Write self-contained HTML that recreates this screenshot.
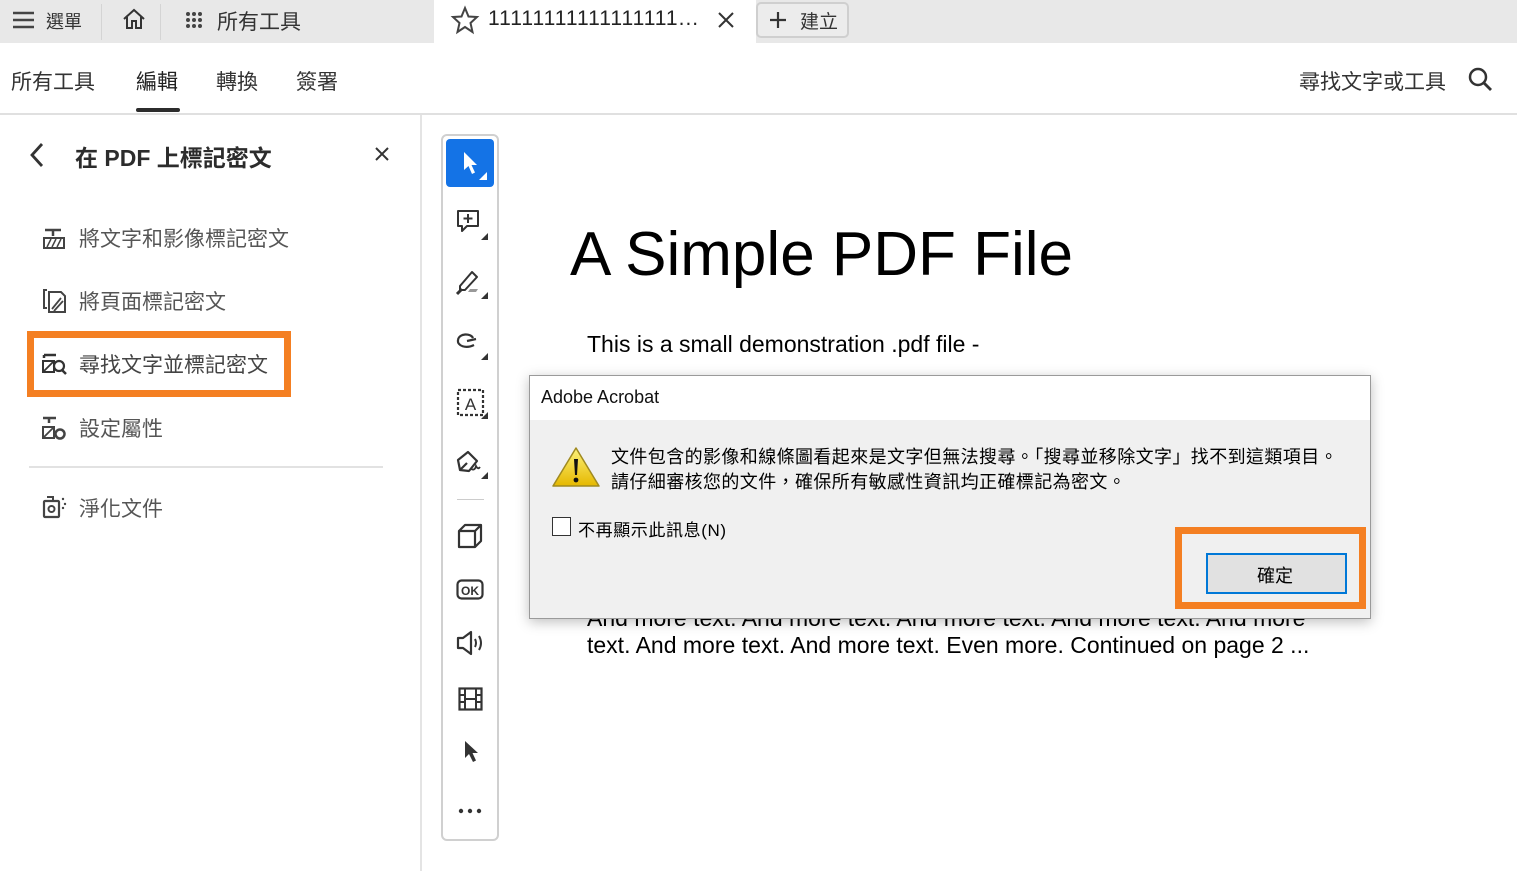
<!DOCTYPE html>
<html><head><meta charset="utf-8"><style>
*{margin:0;padding:0;box-sizing:border-box}
body{width:1517px;height:871px;overflow:hidden;background:#fff;font-family:"Liberation Sans","Noto Sans CJK TC",sans-serif;color:#2c2c2c;position:relative}
.abs{position:absolute}
.t{white-space:nowrap}
svg{position:absolute;overflow:visible}
</style></head><body>
<div class="abs" style="left:0;top:0;width:1517px;height:43px;background:#e8e8e8"></div>
<div class="abs" style="left:434px;top:0;width:322px;height:43px;background:#fff"></div>
<svg style="left:12px;top:10px" width="24" height="20"><path d="M1 3h21M1 10h21M1 17h21" stroke="#444" stroke-width="2.5"/></svg>
<div class="abs t" style="left:46px;top:8px;font-size:18px;color:#333">選單</div>
<div class="abs" style="left:101px;top:4px;width:1px;height:36px;background:#d4d4d4"></div>
<svg style="left:122px;top:8px" width="24" height="22"><path d="M2 11 L12 2 L22 11 M5 9 V20 H10 V13 H14 V20 H19 V9" fill="none" stroke="#333" stroke-width="2"/></svg>
<div class="abs" style="left:160px;top:4px;width:1px;height:36px;background:#d4d4d4"></div>
<svg style="left:185px;top:11px" width="18" height="18"><g fill="#444"><circle cx="3" cy="3" r="2"/><circle cx="9" cy="3" r="2"/><circle cx="15" cy="3" r="2"/><circle cx="3" cy="9" r="2"/><circle cx="9" cy="9" r="2"/><circle cx="15" cy="9" r="2"/><circle cx="3" cy="15" r="2"/><circle cx="9" cy="15" r="2"/><circle cx="15" cy="15" r="2"/></g></svg>
<div class="abs t" style="left:217px;top:6px;font-size:21px;color:#333">所有工具</div>
<svg style="left:451px;top:6px" width="28" height="28"><path d="M14 2 L17.5 10.5 L26 11 L19.5 17 L21.5 26 L14 21 L6.5 26 L8.5 17 L2 11 L10.5 10.5 Z" fill="none" stroke="#444" stroke-width="2"/></svg>
<div class="abs t" style="left:488px;top:7px;font-size:21px;color:#222;letter-spacing:1px">11111111111111111...</div>
<svg style="left:718px;top:12px" width="16" height="16"><path d="M1 1L15 15M15 1L1 15" stroke="#333" stroke-width="2"/></svg>
<div class="abs" style="left:756px;top:2px;width:93px;height:36px;border:2px solid #cfcfcf;border-radius:5px;background:#ececec"></div>
<svg style="left:769px;top:11px" width="18" height="18"><path d="M9 1V17M1 9H17" stroke="#333" stroke-width="2.2"/></svg>
<div class="abs t" style="left:800px;top:7px;font-size:19px;color:#333">建立</div>
<div class="abs t" style="left:11px;top:66px;font-size:21px;color:#333">所有工具</div>
<div class="abs t" style="left:136px;top:66px;font-size:21px;color:#222">編輯</div>
<div class="abs" style="left:136px;top:108px;width:44px;height:4px;background:#2c2c2c;border-radius:2px"></div>
<div class="abs t" style="left:216px;top:66px;font-size:21px;color:#333">轉換</div>
<div class="abs t" style="left:296px;top:66px;font-size:21px;color:#333">簽署</div>
<div class="abs t" style="left:1299px;top:66px;font-size:21px;color:#333">尋找文字或工具</div>
<svg style="left:1468px;top:67px" width="26" height="26"><circle cx="10" cy="10" r="8" fill="none" stroke="#333" stroke-width="2.5"/><path d="M16 16L23 23" stroke="#333" stroke-width="2.8"/></svg>
<div class="abs" style="left:0;top:113px;width:1517px;height:2px;background:#e0e0e0"></div>
<div class="abs" style="left:420px;top:115px;width:2px;height:756px;background:#e4e4e4"></div>
<svg style="left:29px;top:142px" width="16" height="26"><path d="M13 2L3 13L13 24" fill="none" stroke="#333" stroke-width="2.8"/></svg>
<div class="abs t" style="left:75px;top:139px;font-size:23px;font-weight:bold;color:#2c2c2c">在 PDF 上標記密文</div>
<svg style="left:375px;top:147px" width="14" height="14"><path d="M1 1L13 13M13 1L1 13" stroke="#333" stroke-width="2"/></svg>
<svg style="left:43px;top:228px" width="22" height="22"><path d="M2 2H18M10 2V8" stroke="#444" stroke-width="2.5"/><rect x="1" y="10" width="20" height="10" fill="none" stroke="#444" stroke-width="2"/><path d="M4 19L8 11M9 19L13 11M14 19L18 11" stroke="#444" stroke-width="1.5"/></svg>
<div class="abs t" style="left:79px;top:223px;font-size:21px;color:#555">將文字和影像標記密文</div>
<svg style="left:41px;top:288px" width="26" height="26"><path d="M6 2H3V20H6" fill="none" stroke="#444" stroke-width="2"/><path d="M8 4H20L24 8V24H8Z" fill="none" stroke="#444" stroke-width="2"/><path d="M11 21L20 10M13 23L22 13" stroke="#444" stroke-width="1.8"/></svg>
<div class="abs t" style="left:79px;top:286px;font-size:21px;color:#555">將頁面標記密文</div>
<div class="abs" style="left:27px;top:331px;width:264px;height:66px;border:7px solid #f47f22"></div>
<svg style="left:42px;top:352px" width="26" height="24"><path d="M2 3H14M2 3V6" stroke="#333" stroke-width="2.5" fill="none"/><rect x="1" y="9" width="11" height="11" fill="none" stroke="#333" stroke-width="2"/><path d="M2 19L11 10" stroke="#333" stroke-width="1.8"/><circle cx="17" cy="14" r="5" fill="none" stroke="#333" stroke-width="2.2"/><path d="M20 18L24 22" stroke="#333" stroke-width="2.5"/></svg>
<div class="abs t" style="left:79px;top:349px;font-size:21px;color:#444">尋找文字並標記密文</div>
<svg style="left:42px;top:416px" width="26" height="26"><path d="M1 2H14M7 2V7" stroke="#444" stroke-width="2.5"/><rect x="1" y="11" width="11" height="11" fill="none" stroke="#444" stroke-width="2"/><path d="M2 21L11 12" stroke="#444" stroke-width="1.8"/><circle cx="18" cy="18" r="4.5" fill="none" stroke="#444" stroke-width="2.5"/></svg>
<div class="abs t" style="left:79px;top:413px;font-size:21px;color:#555">設定屬性</div>
<div class="abs" style="left:29px;top:466px;width:354px;height:2px;background:#e2e2e2"></div>
<svg style="left:43px;top:495px" width="26" height="24"><rect x="1" y="6" width="15" height="16" rx="1" fill="none" stroke="#444" stroke-width="2.2"/><path d="M4 2H10V6" fill="none" stroke="#444" stroke-width="2"/><circle cx="8.5" cy="14" r="3" fill="none" stroke="#444" stroke-width="2"/><circle cx="20" cy="4" r="1.2" fill="#444"/><circle cx="22" cy="9" r="1.2" fill="#444"/><circle cx="20" cy="13" r="1.2" fill="#444"/></svg>
<div class="abs t" style="left:79px;top:493px;font-size:21px;color:#555">淨化文件</div>
<div class="abs" style="left:441px;top:134px;width:58px;height:707px;border:2px solid #d0d0d0;border-radius:6px;background:#fff"></div>
<div class="abs" style="left:446px;top:139px;width:48px;height:48px;background:#1473e6;border-radius:4px"></div>
<svg style="left:462px;top:150px" width="28" height="32"><path d="M2 2V20L6.5 16L10 24L13 22.5L9.5 15H15Z" fill="#fff"/><path d="M17 30L25 22V30Z" fill="#fff"/></svg>
<svg style="left:456px;top:209px" width="34" height="34"><path d="M2 2H22V17H11L6 22V17H2Z" fill="none" stroke="#333" stroke-width="2" stroke-linejoin="round"/><path d="M12 5V14M7.5 9.5H16.5" stroke="#333" stroke-width="2"/><path d="M25 31L32 24V31Z" fill="#333"/></svg>
<svg style="left:456px;top:268px" width="34" height="34"><path d="M4 18L16 4L21 9L9 22H4Z" fill="none" stroke="#333" stroke-width="2" stroke-linejoin="round"/><path d="M1 26L6 21" stroke="#333" stroke-width="3"/><path d="M12 24H20L22 21H14Z" fill="#999"/><path d="M25 31L32 24V31Z" fill="#333"/></svg>
<svg style="left:456px;top:329px" width="34" height="34"><path d="M17 9C15 4 3 4 2 11C1 17 10 20 18 16M11 12L20 10" fill="none" stroke="#333" stroke-width="2.2"/><path d="M25 31L32 24V31Z" fill="#333"/></svg>
<svg style="left:456px;top:388px" width="34" height="34"><rect x="2" y="2" width="25" height="25" fill="none" stroke="#333" stroke-width="2.2" stroke-dasharray="3 2"/><text x="14.5" y="22" font-size="17" text-anchor="middle" fill="#333" font-family="Liberation Sans">A</text><path d="M25 31L32 24V31Z" fill="#333"/></svg>
<svg style="left:456px;top:448px" width="34" height="34"><path d="M4 22L2 12L12 4L21 13L13 23Z M4 22L11 15" fill="none" stroke="#333" stroke-width="2.2" stroke-linejoin="round"/><path d="M15 21Q19 23 20 18Q22 22 24 19" fill="none" stroke="#333" stroke-width="1.8"/><path d="M25 31L32 24V31Z" fill="#333"/></svg>
<div class="abs" style="left:457px;top:499px;width:27px;height:1px;background:#ccc"></div>
<svg style="left:457px;top:523px" width="26" height="26"><path d="M2 8H18V24H2Z M2 8L8 2H24V18L18 24 M18 8L24 2" fill="none" stroke="#333" stroke-width="2.2" stroke-linejoin="round"/></svg>
<svg style="left:456px;top:579px" width="28" height="22"><rect x="1.5" y="1.5" width="25" height="18" rx="4" fill="none" stroke="#333" stroke-width="2.2"/><text x="14" y="16" font-size="12" font-weight="bold" text-anchor="middle" fill="#333" font-family="Liberation Sans">OK</text></svg>
<svg style="left:456px;top:631px" width="30" height="24"><path d="M2 7H7L15 1V23L7 17H2Z" fill="none" stroke="#333" stroke-width="2.2" stroke-linejoin="round"/><path d="M19 8Q21 12 19 16M23 5Q27 12 23 19" fill="none" stroke="#333" stroke-width="2"/></svg>
<svg style="left:458px;top:687px" width="26" height="24"><rect x="1.5" y="1.5" width="22" height="21" fill="none" stroke="#333" stroke-width="2.2"/><path d="M7 1.5V22.5M18 1.5V22.5M1.5 8H7M1.5 15H7M18 8H23.5M18 15H23.5M7 12H18" stroke="#333" stroke-width="2"/></svg>
<svg style="left:463px;top:740px" width="18" height="24"><path d="M2 1V18L6 14L10 22L13 20.5L9.5 13H15Z" fill="#333"/></svg>
<svg style="left:458px;top:808px" width="24" height="6"><circle cx="3" cy="3" r="2.2" fill="#333"/><circle cx="12" cy="3" r="2.2" fill="#333"/><circle cx="21" cy="3" r="2.2" fill="#333"/></svg>
<div class="abs t" style="left:570px;top:219px;font-size:62px;color:#000">A Simple PDF File</div>
<div class="abs t" style="left:587px;top:331px;font-size:23px;color:#000">This is a small demonstration .pdf file -</div>
<div class="abs t" style="left:587px;top:605px;font-size:23px;color:#000">And more text. And more text. And more text. And more text. And more</div>
<div class="abs t" style="left:587px;top:632px;font-size:23px;color:#000">text. And more text. And more text. Even more. Continued on page 2 ...</div>
<div class="abs" style="left:529px;top:375px;width:842px;height:244px;background:#f0f0f0;border:1px solid #9a9a9a;box-shadow:0 3px 12px rgba(0,0,0,.25)"></div>
<div class="abs" style="left:530px;top:376px;width:840px;height:44px;background:#fff"></div>
<div class="abs t" style="left:541px;top:387px;font-size:18px;color:#111">Adobe Acrobat</div>
<svg style="left:551px;top:446px" width="50" height="42"><defs><linearGradient id="g" x1="0" y1="0" x2="0" y2="1"><stop offset="0" stop-color="#fdf27a"/><stop offset="1" stop-color="#e5b800"/></linearGradient></defs><path d="M25 2L48 40H2Z" fill="url(#g)" stroke="#a08a20" stroke-width="1.5" stroke-linejoin="round"/><path d="M23 13H27L26 29H24Z" fill="#111"/><circle cx="25" cy="34" r="2.4" fill="#111"/></svg>
<div class="abs t" style="left:611px;top:443px;font-size:18px;color:#000;letter-spacing:0.4px">文件包含的影像和線條圖看起來是文字但無法搜尋。「搜尋並移除文字」找不到這類項目。</div>
<div class="abs t" style="left:611px;top:468px;font-size:18px;color:#000;letter-spacing:0.4px">請仔細審核您的文件，確保所有敏感性資訊均正確標記為密文。</div>
<div class="abs" style="left:552px;top:517px;width:19px;height:19px;border:1px solid #333;background:#fff"></div>
<div class="abs t" style="left:578px;top:516px;font-size:17px;color:#000;letter-spacing:0.6px">不再顯示此訊息(N)</div>
<div class="abs" style="left:1175px;top:527px;width:191px;height:82px;border:7px solid #f47f22"></div>
<div class="abs" style="left:1206px;top:553px;width:141px;height:41px;border:2px solid #0078d7;background:#e1e1e1"></div>
<div class="abs t" style="left:1257px;top:562px;font-size:18px;color:#000">確定</div>
</body></html>
